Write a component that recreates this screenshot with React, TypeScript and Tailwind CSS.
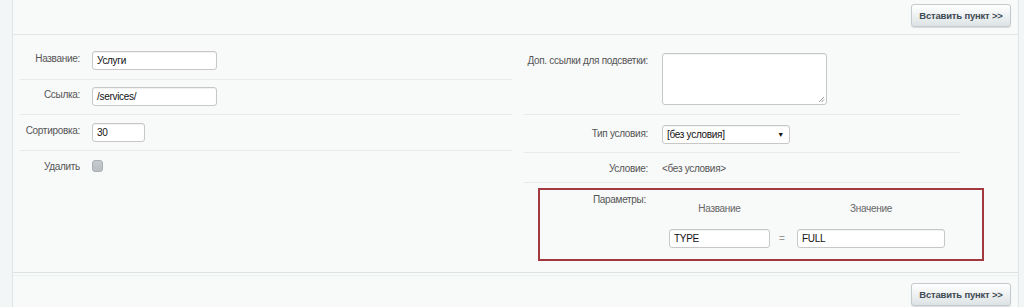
import React from "react";

const Btn = () => (
  <button className="h-[23px] w-[100px] whitespace-nowrap rounded-[3px] border border-[#c2cacd] bg-gradient-to-b from-[#ffffff] to-[#dde3e5] text-[9.5px] tracking-[-0.2px] font-bold text-[#3f4b54] shadow-[0_1px_1px_rgba(0,0,0,0.12)] leading-[21px]">
    Вставить пункт &gt;&gt;
  </button>
);

const inputCls =
  "h-[19px] whitespace-nowrap rounded-[3px] border border-[#c7c7c7] bg-white px-[4px] text-[10px] leading-[17px] text-[#111] shadow-[inset_0_1px_1px_rgba(0,0,0,0.06)]";

const lbl = "text-right text-[#555] whitespace-nowrap";

export default function App() {
  return (
    <div className="w-[1024px] h-[307px] flex bg-[#f3f6f6] font-['Liberation_Sans',Arial,sans-serif] text-[10px] tracking-[-0.3px] leading-[13px] overflow-hidden">
      <div className="w-[12px]" />
      <div className="w-[1007px] border-l border-r border-[#dfe5e5] bg-[#f8f9f9] flex flex-col">
        {/* top toolbar */}
        <div className="h-[35px] border-b border-[#e1e6e6] flex justify-end items-start pt-[4px] pr-[7px]">
          <Btn />
        </div>

        {/* content */}
        <div className="flex h-[237px]">
          {/* left column */}
          <div className="ml-[7px] w-[492px] flex flex-col">
            <div className="flex pt-[16px] pb-[9px] border-b border-[#e6eaea]">
              <div className={lbl + " w-[60px] pt-[1px]"}>Название:</div>
              <div className="ml-[12px]">
                <div className={inputCls + " w-[125px]"}>Услуги</div>
              </div>
            </div>
            <div className="flex pt-[7px] pb-[8px] border-b border-[#e6eaea]">
              <div className={lbl + " w-[60px] pt-[1px]"}>Ссылка:</div>
              <div className="ml-[12px]">
                <div className={inputCls + " w-[125px]"}>/services/</div>
              </div>
            </div>
            <div className="flex pt-[8px] pb-[8px] border-b border-[#e6eaea]">
              <div className={lbl + " w-[60px] pt-[1px]"}>Сортировка:</div>
              <div className="ml-[12px]">
                <div className={inputCls + " w-[53px]"}>30</div>
              </div>
            </div>
            <div className="flex pt-[8px]">
              <div className={lbl + " w-[60px] pt-[1px]"}>Удалить</div>
              <div className="ml-[12px] pt-[1px]">
                <div className="w-[11px] h-[12px] rounded-[3px] border border-[#a9aeb2] bg-gradient-to-b from-[#c6cace] to-[#b9bec2]" />
              </div>
            </div>
          </div>

          {/* right column */}
          <div className="ml-[12px] w-[470px] flex flex-col">
            <div className="w-[436px] flex pt-[18px] pb-[9px] border-b border-[#e6eaea]">
              <div className={lbl + " w-[124px] pt-[1px]"}>Доп. ссылки для подсветки:</div>
              <div className="ml-[14px] relative w-[165px] h-[52px] rounded-[3px] border border-[#c7c7c7] bg-white shadow-[inset_0_1px_1px_rgba(0,0,0,0.06)]">
                <svg className="absolute right-[1px] bottom-[1px]" width="7" height="7" viewBox="0 0 7 7">
                  <path d="M6 1L1 6M6 3.5L3.5 6" stroke="#9a9a9a" strokeWidth="1" />
                </svg>
              </div>
            </div>
            <div className="w-[436px] flex pt-[10px] pb-[8px] border-b border-[#e6eaea]">
              <div className={lbl + " w-[124px] pt-[2px]"}>Тип условия:</div>
              <div className="ml-[14px] w-[128px] h-[19px] rounded-[3px] border border-[#c7c7c7] bg-white flex items-center justify-between px-[4px] text-[#111] shadow-[inset_0_1px_1px_rgba(0,0,0,0.06)]">
                <span>[без условия]</span>
                <span className="text-[7px] leading-[8px] mr-[1px]">▼</span>
              </div>
            </div>
            <div className="w-[436px] flex pt-[9px] pb-[7px] border-b border-[#e6eaea]">
              <div className={lbl + " w-[124px]"}>Условие:</div>
              <div className="ml-[14px] text-[#555]">&lt;без условия&gt;</div>
            </div>
            <div className="mt-[5px] ml-[14px] w-[446px] h-[73px] border-2 border-[#a3393e] flex">
              <div className={lbl + " w-[106px] pt-[3px]"}>Параметры:</div>
              <div className="ml-[23px] pt-[12px] flex flex-col">
                <div className="flex text-[#666]">
                  <div className="w-[101px] text-center">Название</div>
                  <div className="w-[27px]" />
                  <div className="w-[148px] text-center">Значение</div>
                </div>
                <div className="flex mt-[14px] items-center">
                  <div className={inputCls + " w-[101px] h-[18px] leading-[16px]"}>TYPE</div>
                  <div className="w-[27px] pl-[9px] text-[#999]">=</div>
                  <div className={inputCls + " w-[148px] h-[18px] leading-[16px]"}>FULL</div>
                </div>
              </div>
            </div>
          </div>
        </div>

        {/* bottom */}
        <div className="border-t border-[#dde3e3]" />
        <div className="mt-[2px] border-t border-[#eef1f1]" />
        <div className="flex justify-end pt-[7px] pr-[7px]">
          <Btn />
        </div>
      </div>
    </div>
  );
}
